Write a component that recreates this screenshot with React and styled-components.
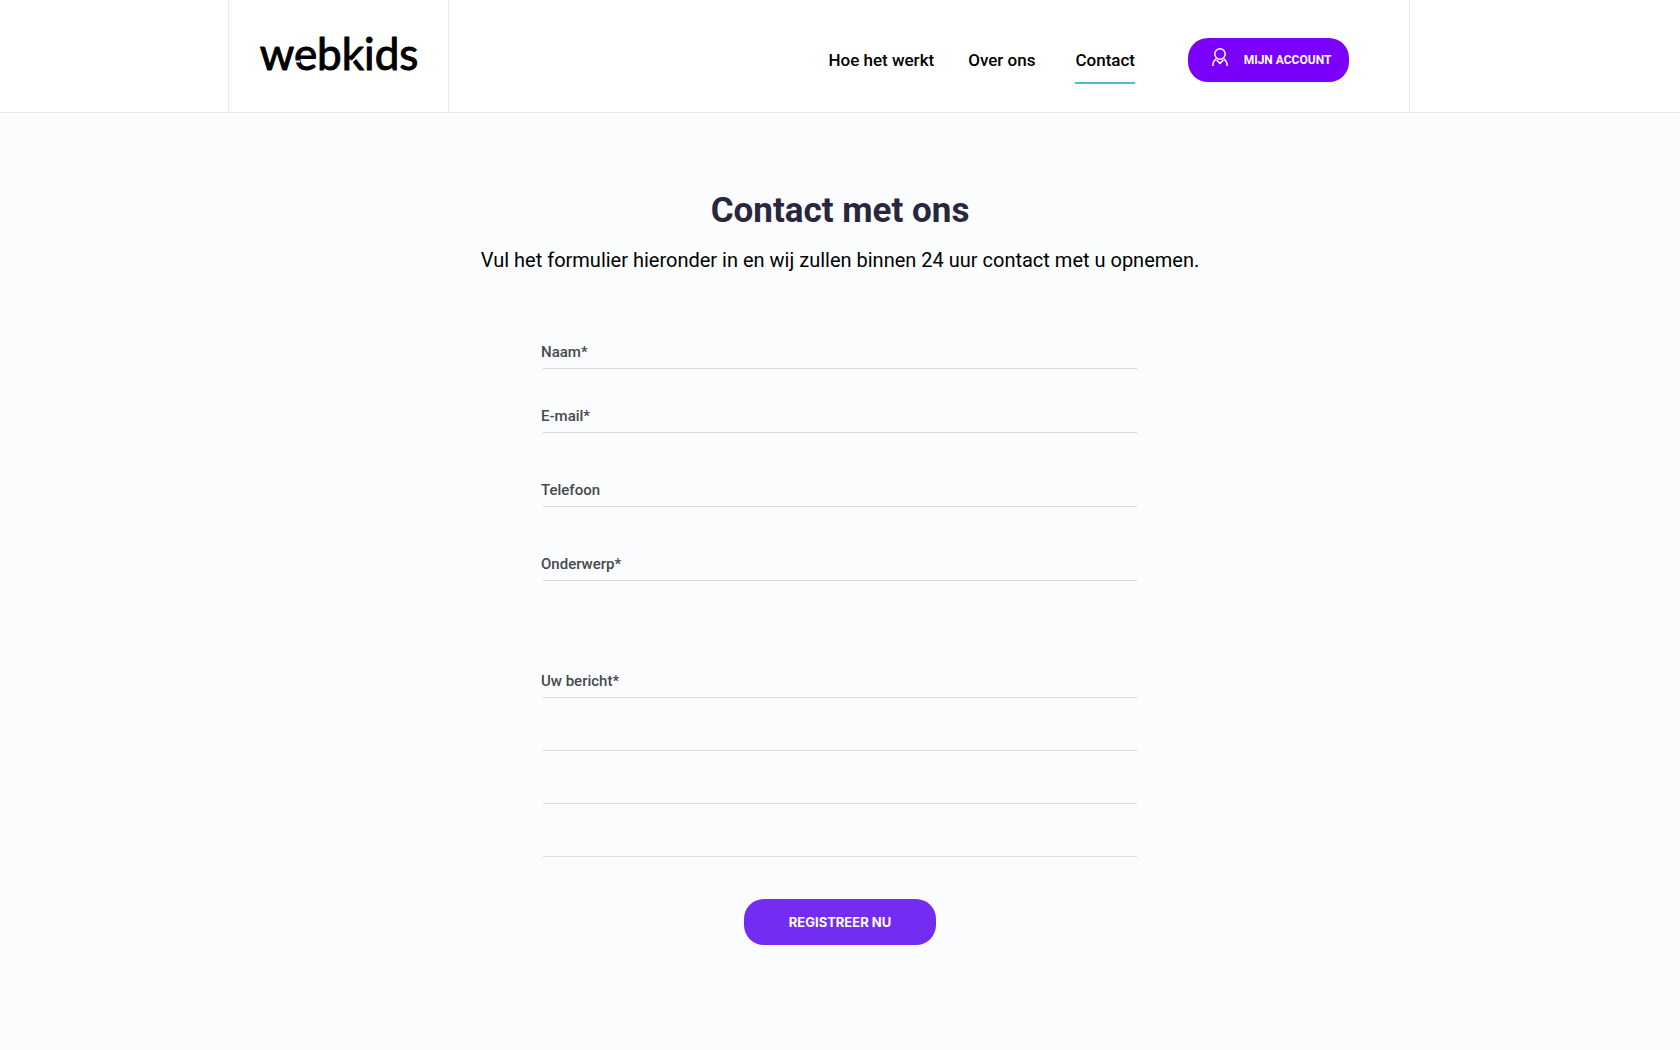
import React from "react";
import styled, { createGlobalStyle } from "styled-components";

const GlobalStyle = createGlobalStyle`
  *, *::before, *::after { box-sizing: border-box; }
  body {
    margin: 0;
    background: #fbfcfe;
    color: #000;
    font-family: Roboto, "Liberation Sans", sans-serif;
  }
`;

const Header = styled.header`
  display: grid;
  grid-template-columns: 228fr minmax(1000px, 1182px) 270fr;
  background: #fff;
  border-bottom: 1px solid #e9e9eb;
`;

const HeaderInner = styled.div`
  grid-column: 2;
  display: flex;
  min-height: 112px;
  border: solid #e9e9e9;
  border-width: 0 1px;
`;

const Brand = styled.a`
  display: flex;
  align-items: center;
  justify-content: center;
  width: 220px;
  border-right: 1px solid #e9e9e9;
`;

const Nav = styled.nav`
  flex: 1;
  display: flex;
  align-items: center;
  justify-content: flex-end;
  padding-right: 60px;
  padding-top: 8px;
`;

const NavLink = styled.a`
  margin-right: ${(p) => p.$gap}px;
  padding: 14px 0 12px;
  border-bottom: 2px solid ${(p) => (p.$active ? "#4dbdd0" : "transparent")};
  color: #000;
  font-size: 17px;
  font-weight: 500;
  line-height: 20px;
  text-decoration: none;
`;

const Button = styled.button`
  display: flex;
  align-items: center;
  justify-content: center;
  height: ${(p) => p.$height}px;
  width: ${(p) => p.$width}px;
  padding: 0;
  border: 0;
  border-radius: 20px;
  background: ${(p) => p.$color};
  color: #fff;
  font-family: ${(p) => p.$font};
  font-size: ${(p) => p.$size}px;
  font-weight: 700;
  line-height: 16px;
  cursor: pointer;
`;

const AccountIcon = styled.svg`
  margin: 0 16px 6px 6px;
`;

const Main = styled.main`
  display: flex;
  flex-direction: column;
  align-items: center;
  padding: 72px 24px 104px;
`;

const Title = styled.h1`
  margin: 0;
  color: #29263e;
  font-size: 35px;
  font-weight: 700;
  line-height: 52px;
`;

const Intro = styled.p`
  margin: 7px 0 0;
  font-size: 20px;
  line-height: 32px;
`;

const Form = styled.form`
  display: flex;
  flex-direction: column;
  align-items: stretch;
  width: 100%;
  max-width: 594px;
  margin-top: 61px;
`;

const Field = styled.div`
  display: flex;
  align-items: center;
  height: 32px;
  margin-bottom: ${(p) => p.$gap}px;
  padding-bottom: 2px;
  border-bottom: 1px solid #d9dadd;
`;

const Label = styled.label`
  margin-left: -2px;
  color: #48494c;
  font-size: 15px;
  font-weight: 500;
  line-height: 20px;
`;

const Input = styled.input`
  flex: 1;
  min-width: 0;
  margin-left: 12px;
  padding: 0;
  border: 0;
  outline: 0;
  background: transparent;
  font: inherit;
  font-size: 15px;
`;

const Message = styled.textarea`
  display: block;
  height: 159px;
  padding: 0;
  border: 0;
  outline: 0;
  resize: none;
  background: repeating-linear-gradient(transparent 0 52px, #dcdddf 52px 53px);
  font: inherit;
  font-size: 15px;
  line-height: 53px;
`;

const Actions = styled.div`
  display: flex;
  justify-content: center;
  margin-top: 42px;
`;

const fields = [
  { id: "naam", label: "Naam*", type: "text", gap: 32, required: true },
  { id: "email", label: "E-mail*", type: "email", gap: 42, required: true },
  { id: "telefoon", label: "Telefoon", type: "tel", gap: 42 },
  { id: "onderwerp", label: "Onderwerp*", type: "text", gap: 85, required: true },
];

function Logo() {
  return (
    <svg width="176" height="60" viewBox="0 0 176 60" aria-label="webkids">
      <text
        x="88"
        y="44"
        textAnchor="middle"
        fontFamily="Lato, sans-serif"
        fontSize="44"
        fill="#000"
        stroke="#000"
        strokeWidth="1"
        strokeLinejoin="round"
      >
        webkids
      </text>
      <g stroke="#fff" strokeWidth="2">
        <path d="M39 35.5H49" />
        <path d="M99 37.5L107 30" />
      </g>
    </svg>
  );
}

export default function App() {
  return (
    <>
      <GlobalStyle />
      <Header>
        <HeaderInner>
          <Brand href="#">
            <Logo />
          </Brand>
          <Nav>
            <NavLink href="#werkt" $gap={34}>Hoe het werkt</NavLink>
            <NavLink href="#over" $gap={40}>Over ons</NavLink>
            <NavLink href="#contact" $gap={53} $active>Contact</NavLink>
            <Button type="button" $width={161} $height={44} $color="#7a00fb" $font="Roboto, sans-serif" $size={12}>
              <AccountIcon width="16" height="18" viewBox="0 0 16 18" fill="none" stroke="#fff" strokeWidth="1.5" aria-hidden="true">
                <circle cx="8" cy="6" r="5.2" />
                <path d="M0.8 18C0.8 14.8 2 12.4 4.2 10.8" />
                <path d="M15.2 18C15.2 14.8 14 12.4 11.8 10.8" />
                <path d="M4.6 12L8 15.4L11.4 12" />
              </AccountIcon>
              MIJN ACCOUNT
            </Button>
          </Nav>
        </HeaderInner>
      </Header>
      <Main>
        <Title>Contact met ons</Title>
        <Intro>Vul het formulier hieronder in en wij zullen binnen 24 uur contact met u opnemen.</Intro>
        <Form onSubmit={(e) => e.preventDefault()}>
          {fields.map((f) => (
            <Field key={f.id} $gap={f.gap}>
              <Label htmlFor={f.id}>{f.label}</Label>
              <Input id={f.id} name={f.id} type={f.type} required={f.required} />
            </Field>
          ))}
          <Field $gap={0}>
            <Label htmlFor="bericht">Uw bericht*</Label>
          </Field>
          <Message id="bericht" name="bericht" required />
          <Actions>
            <Button type="submit" $width={192} $height={46} $color="#742cf2" $font="Inter, sans-serif" $size={13}>
              REGISTREER NU
            </Button>
          </Actions>
        </Form>
      </Main>
    </>
  );
}
